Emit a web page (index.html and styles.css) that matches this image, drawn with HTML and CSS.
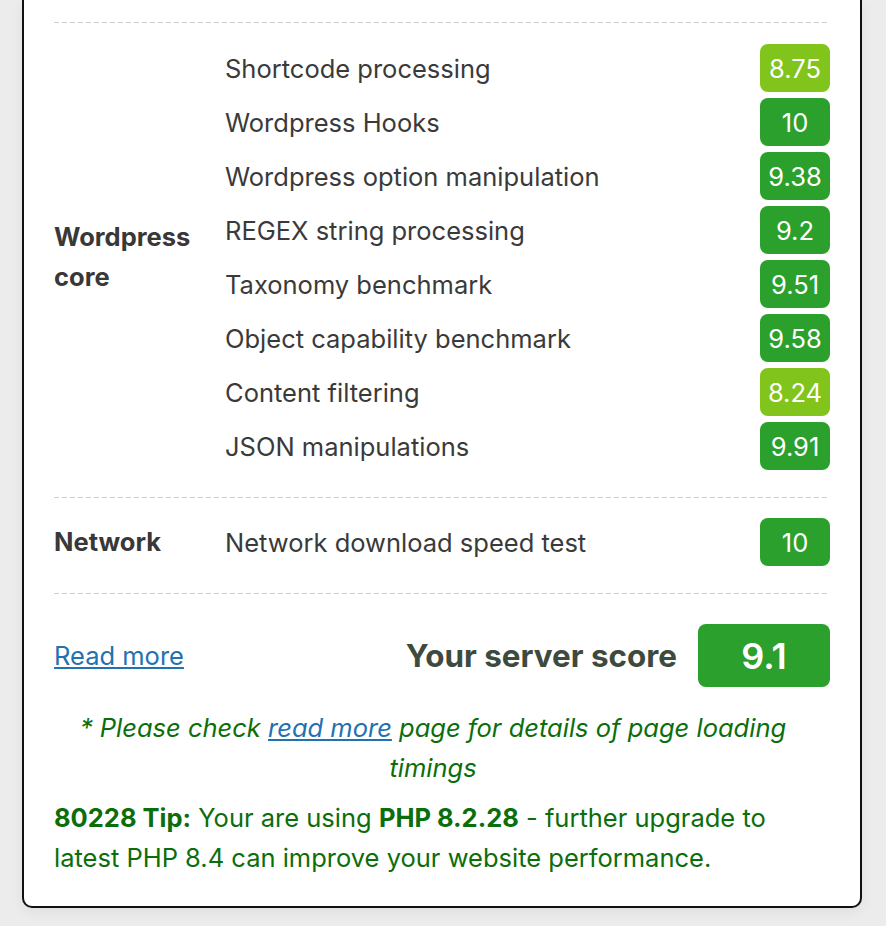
FILE: index.html
```html
<!DOCTYPE html>
<html lang="en">
<head>
<meta charset="utf-8">
<title>Server benchmark</title>
<link rel="stylesheet" href="styles.css">
</head>
<body>
<div class="card">
  <div class="section">
    <div class="group">Wordpress core</div>
    <div class="tests">
      <div class="row"><span class="name">Shortcode processing</span><span class="badge light">8.75</span></div>
      <div class="row"><span class="name">Wordpress Hooks</span><span class="badge">10</span></div>
      <div class="row"><span class="name">Wordpress option manipulation</span><span class="badge">9.38</span></div>
      <div class="row"><span class="name">REGEX string processing</span><span class="badge">9.2</span></div>
      <div class="row"><span class="name">Taxonomy benchmark</span><span class="badge">9.51</span></div>
      <div class="row"><span class="name">Object capability benchmark</span><span class="badge">9.58</span></div>
      <div class="row"><span class="name">Content filtering</span><span class="badge light">8.24</span></div>
      <div class="row"><span class="name">JSON manipulations</span><span class="badge">9.91</span></div>
    </div>
  </div>
  <div class="section">
    <div class="group">Network</div>
    <div class="tests">
      <div class="row"><span class="name">Network download speed test</span><span class="badge">10</span></div>
    </div>
  </div>
  <div class="score-row">
    <a class="link" href="#">Read more</a>
    <div class="score">
      <span class="score-label">Your server score</span>
      <span class="score-badge">9.1</span>
    </div>
  </div>
  <p class="note">* Please check <a class="link" href="#">read more</a> page for details of page loading timings</p>
  <p class="tip"><b>80228 Tip:</b> Your are using <b>PHP 8.2.28</b> - further upgrade to latest PHP 8.4 can improve your website performance.</p>
</div>
</body>
</html>
```

FILE: styles.css
```css
html, body {
  margin: 0;
  padding: 0;
}
body {
  background: #ececec;
  font-family: Inter, "Liberation Sans", Arial, sans-serif;
  font-size: 25.5px;
  color: #333;
}
.card {
  margin: 0 24px 18px 22px;
  background: #fff;
  border: 2px solid #111;
  border-top: none;
  border-radius: 0 0 10px 10px;
  padding: 22px 30px 28px 30px;
  box-shadow: 0 4px 14px rgba(0, 0, 0, 0.06);
}
.section {
  display: grid;
  grid-template-columns: 171px 1fr;
  align-items: center;
  padding: 22px 0 27px;
  background-image: repeating-linear-gradient(to right, #d0d0d0 0 5px, transparent 5px 8px);
  background-size: 100% 1px;
  background-repeat: no-repeat;
  background-position: top left;
}
.section + .section {
  padding-top: 21px;
}
.group {
  font-weight: 700;
  line-height: 40px;
  color: #383838;
}
.tests {
  display: flex;
  flex-direction: column;
  gap: 6px;
}
.row {
  display: flex;
  justify-content: space-between;
  align-items: center;
  height: 48px;
}
.name {
  color: #3a3a3a;
}
.badge {
  width: 70px;
  height: 48px;
  border-radius: 8px;
  background: #2ca02c;
  color: #fff;
  display: flex;
  align-items: center;
  justify-content: center;
}
.badge.light {
  background: #80c41c;
}
.score-row {
  display: flex;
  justify-content: space-between;
  align-items: center;
  padding-top: 31px;
  background-image: repeating-linear-gradient(to right, #d0d0d0 0 5px, transparent 5px 8px);
  background-size: 100% 1px;
  background-repeat: no-repeat;
  background-position: top left;
}
.link {
  color: #2271b1;
  text-decoration: underline;
}
.score {
  display: flex;
  align-items: center;
  gap: 21px;
}
.score-label {
  font-size: 31.4px;
  font-weight: 700;
  color: #3d4a3e;
}
.score-badge {
  width: 132px;
  height: 63px;
  border-radius: 8px;
  background: #2ca02c;
  color: #fff;
  font-size: 36px;
  font-weight: 600;
  display: flex;
  align-items: center;
  justify-content: center;
}
.note {
  margin: 21px 0 0;
  text-align: center;
  font-style: italic;
  line-height: 40px;
  color: #0b6e0b;
  padding: 0 18px 0 0;
}
.tip {
  margin: 10px 0 0;
  padding-right: 20px;
  line-height: 40px;
  color: #0b6e0b;
}
.tip b {
  font-weight: 700;
}
```
